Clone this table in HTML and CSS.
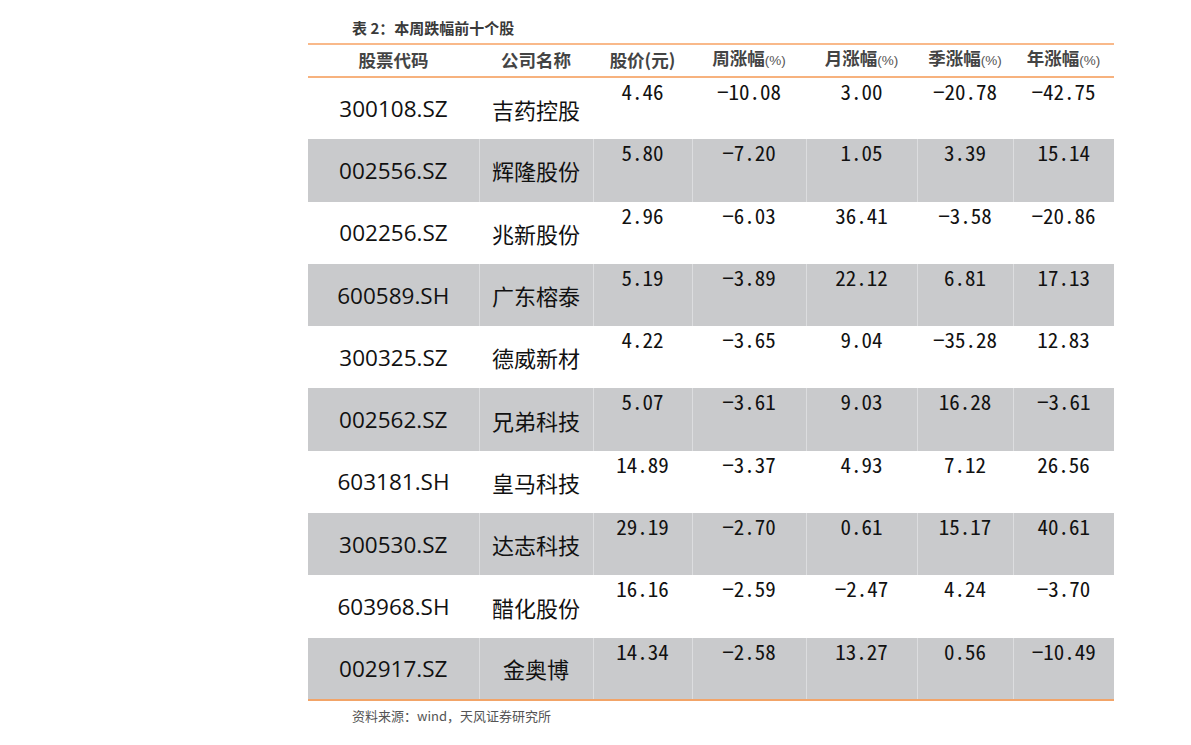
FILE: index.html
```html
<!DOCTYPE html>
<html lang="zh">
<head>
<meta charset="utf-8">
<link rel="stylesheet" href="styles.css">
</head>
<body>
<div class="page">
  <div class="title">表 2：本周跌幅前十个股</div>
  <table class="tbl">
    <colgroup>
      <col class="c1"><col class="c2"><col class="c3"><col class="c4"><col class="c5"><col class="c6"><col class="c7">
    </colgroup>
    <thead>
      <tr>
        <th>股票代码</th><th>公司名称</th><th>股价(元)</th>
        <th>周涨幅<span class="pct">(%)</span></th>
        <th>月涨幅<span class="pct">(%)</span></th>
        <th>季涨幅<span class="pct">(%)</span></th>
        <th>年涨幅<span class="pct">(%)</span></th>
      </tr>
    </thead>
    <tbody>
      <tr><td class="code">300108.SZ</td><td class="name">吉药控股</td><td class="num">4.46</td><td class="num">−10.08</td><td class="num">3.00</td><td class="num">−20.78</td><td class="num">−42.75</td></tr>
      <tr class="g"><td class="code">002556.SZ</td><td class="name">辉隆股份</td><td class="num">5.80</td><td class="num">−7.20</td><td class="num">1.05</td><td class="num">3.39</td><td class="num">15.14</td></tr>
      <tr><td class="code">002256.SZ</td><td class="name">兆新股份</td><td class="num">2.96</td><td class="num">−6.03</td><td class="num">36.41</td><td class="num">−3.58</td><td class="num">−20.86</td></tr>
      <tr class="g"><td class="code">600589.SH</td><td class="name">广东榕泰</td><td class="num">5.19</td><td class="num">−3.89</td><td class="num">22.12</td><td class="num">6.81</td><td class="num">17.13</td></tr>
      <tr><td class="code">300325.SZ</td><td class="name">德威新材</td><td class="num">4.22</td><td class="num">−3.65</td><td class="num">9.04</td><td class="num">−35.28</td><td class="num">12.83</td></tr>
      <tr class="g"><td class="code">002562.SZ</td><td class="name">兄弟科技</td><td class="num">5.07</td><td class="num">−3.61</td><td class="num">9.03</td><td class="num">16.28</td><td class="num">−3.61</td></tr>
      <tr><td class="code">603181.SH</td><td class="name">皇马科技</td><td class="num">14.89</td><td class="num">−3.37</td><td class="num">4.93</td><td class="num">7.12</td><td class="num">26.56</td></tr>
      <tr class="g"><td class="code">300530.SZ</td><td class="name">达志科技</td><td class="num">29.19</td><td class="num">−2.70</td><td class="num">0.61</td><td class="num">15.17</td><td class="num">40.61</td></tr>
      <tr><td class="code">603968.SH</td><td class="name">醋化股份</td><td class="num">16.16</td><td class="num">−2.59</td><td class="num">−2.47</td><td class="num">4.24</td><td class="num">−3.70</td></tr>
      <tr class="g"><td class="code">002917.SZ</td><td class="name">金奥博</td><td class="num">14.34</td><td class="num">−2.58</td><td class="num">13.27</td><td class="num">0.56</td><td class="num">−10.49</td></tr>
    </tbody>
  </table>
  <div class="src">资料来源：wind，天风证券研究所</div>
</div>
</body>
</html>
```
FILE: styles.css
```css
html, body {
  margin: 0;
  padding: 0;
  background: #ffffff;
}
.page {
  padding: 18px 0 0 308px;
  width: 806px;
  font-family: "Noto Sans CJK SC", "Noto Sans", sans-serif;
}
.title {
  padding-left: 44px;
  height: 25px;
  line-height: 20px;
  font-size: 15px;
  font-weight: 700;
  color: #3a3a3a;
}
.tbl {
  width: 806px;
  border-collapse: collapse;
  table-layout: fixed;
}
.c1 { width: 171px; }
.c2 { width: 114px; }
.c3 { width: 99px; }
.c4 { width: 114px; }
.c5 { width: 111px; }
.c6 { width: 96px; }
.c7 { width: 101px; }
.tbl thead tr {
  border-top: 2px solid #f9b98a;
  border-bottom: 2px solid #f7b27e;
}
.tbl th {
  height: 28px;
  padding: 0 0 2px 0;
  font-size: 17.5px;
  font-weight: 700;
  color: #444444;
  text-align: center;
  vertical-align: middle;
  line-height: 26px;
}
.tbl th .pct {
  font-size: 13.5px;
  font-weight: 400;
  font-family: "Liberation Sans", sans-serif;
  color: #555555;
}
.tbl tbody tr {
  height: 62.3px;
}
.tbl tbody tr:last-child {
  border-bottom: 2px solid #f2a468;
}
.tbl td {
  padding: 0;
  text-align: center;
  color: #111111;
}
.tbl tr.g td {
  background: #c9cacc;
}
.tbl tr.g td + td {
  border-left: 1px solid #dcdddf;
}
.code {
  font-family: "Open Sans", "Liberation Sans", sans-serif;
  font-size: 22.5px;
  vertical-align: middle;
}
.name {
  font-family: "Noto Sans CJK SC", sans-serif;
  font-size: 22px;
  vertical-align: middle;
}
.num {
  font-family: "Noto Sans Mono CJK SC", "DejaVu Sans Mono", monospace;
  font-size: 21px;
  vertical-align: top;
  line-height: 26px;
  padding-top: 0 !important;
}
.src {
  margin-top: 5px;
  padding-left: 44px;
  font-size: 13px;
  line-height: 20px;
  color: #555555;
}
```
